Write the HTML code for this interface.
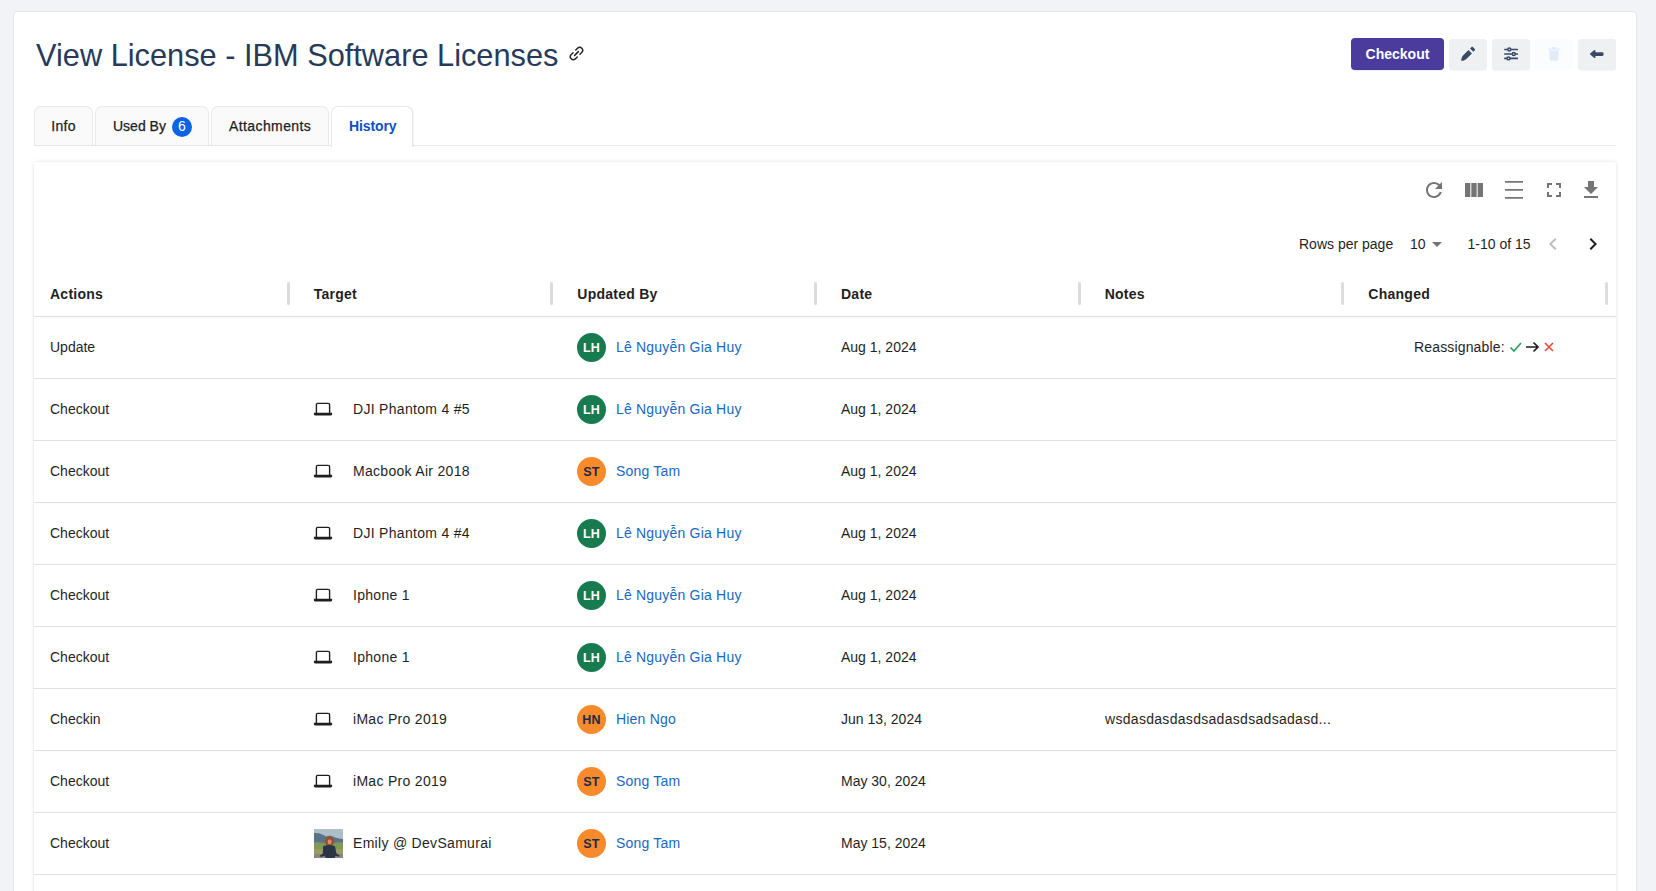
<!DOCTYPE html>
<html><head><meta charset="utf-8">
<style>
*{box-sizing:border-box;margin:0;padding:0}
html,body{width:1656px;height:891px;overflow:hidden}
body{background:#f2f3f6;font-family:"Liberation Sans",sans-serif;color:#1f1f1f;position:relative}
.abs{position:absolute}
.card{position:absolute;left:13px;top:11px;width:1624px;height:920px;background:#fff;border:1px solid #e3e5e9;border-radius:4px}
.title{position:absolute;left:36px;top:37.8px;font-size:30.75px;line-height:36px;color:#283a5a;white-space:nowrap}
.btn{position:absolute;left:1351px;top:38px;width:93px;height:32px;border-radius:4px;background:#4a3b9d;color:#fff;font-size:14px;font-weight:bold;text-align:center;line-height:32px;box-shadow:0 1px 1px rgba(80,140,220,.15)}
.ibtn{position:absolute;top:39px;width:38px;height:31px;border-radius:3px;background:#eef0f2;box-shadow:0 1px 1px rgba(0,0,0,.04)}
.ibtn svg{position:absolute}
.tabline{position:absolute;left:34px;top:145px;width:1582px;height:1px;background:#e6e6e6}
.tab{position:absolute;top:106px;height:39px;background:#fafafa;border:1px solid #e8e8e8;border-bottom:none;border-radius:7px 7px 0 0;font-size:14px;color:#1d1d1d}
.tab span{position:absolute;top:11px;line-height:16px;white-space:nowrap;-webkit-text-stroke:.25px currentColor}
.badge{position:absolute;left:76px;top:10px;width:20px;height:20px;border-radius:50%;background:#0b63e5;color:#fff;font-size:13px;text-align:center;line-height:19.5px}
.paper{position:absolute;left:34px;top:162px;width:1582px;height:760px;background:#fff;border-radius:2px;box-shadow:0 0 4px rgba(0,0,0,.11),0 1px 2px rgba(0,0,0,.05)}
.t{position:absolute;font-size:14px;line-height:16px;color:#1f1f1f;white-space:nowrap}
.sep{position:absolute;top:282px;width:3px;height:23px;border-radius:2px;background:#dcdcdc}
.hdrline{position:absolute;left:34px;top:316px;width:1582px;height:1px;background:#e0e0e0;box-shadow:0 1px 3px rgba(0,0,0,.06)}
.row{position:absolute;left:34px;width:1582px;height:62px;border-bottom:1px solid #e0e0e0}
.av{position:absolute;width:29px;height:29px;border-radius:50%;font-size:12.5px;font-weight:bold;text-align:center;line-height:30.5px;letter-spacing:.2px}
.thumb{position:absolute;width:29px;height:29px;background:linear-gradient(180deg,#8fb0cf 0%,#9fb9c9 30%,#7c8f62 45%,#5d7340 70%,#8a8a6a 100%)}
.ticon{position:absolute;fill:#757575}
</style></head><body>
<div class="card"></div>
<div class="title">View License - IBM Software Licenses</div>
<svg class="abs" style="left:568.6px;top:46.4px" width="15" height="15" viewBox="0 0 16 16"><g fill="none" stroke="#222" stroke-width="1.55" stroke-linecap="round"><path d="M7.2 4.2L9.1 2.4a3.1 3.1 0 0 1 4.5 4.5L11.7 8.8"/><path d="M4.3 7.2L2.4 9.1a3.1 3.1 0 0 0 4.5 4.5L8.8 11.7"/><path d="M6 10L10 6"/></g></svg>

<div class="btn">Checkout</div>
<div class="ibtn" style="left:1449px"><svg style="left:11px;top:7px" width="16" height="16" viewBox="0 0 16 16"><path d="M8.5 4L11.9 7.4 6.4 12.9C5 14.2 2.5 14.8 1.1 14.8 1.2 13.4 1.7 11 3 9.5Z" fill="#384965"/><path d="M10 2.4L11.3 1.2C11.8.7 12.6.7 13.1 1.2L14.6 2.7C15.1 3.2 15.1 4 14.6 4.5L13.4 5.8Z" fill="#384965"/></svg></div>
<div class="ibtn" style="left:1492px"><svg style="left:11px;top:7px" width="16" height="16" viewBox="0 0 16 16"><g fill="none" stroke="#384965" stroke-width="1.7" stroke-linecap="round"><path d="M1.9 3.5h12.4M1.9 8h12.4M1.9 12.4h12.4"/></g><g fill="#eef0f2" stroke="#384965" stroke-width="1.5"><circle cx="6.3" cy="3.5" r="1.45"/><circle cx="10.75" cy="8" r="1.45"/><circle cx="5.5" cy="12.4" r="1.45"/></g></svg></div>
<div class="ibtn" style="left:1535px;background:#fafcfe;box-shadow:none"><svg style="left:12px;top:6.6px" width="14" height="15" viewBox="0 0 14 15"><path d="M1 2.5h12v1.3H1z M5 1h4v1.5H5z" fill="#e2ebf7"/><path d="M2 4.5h10l-.9 9.2c-.1.7-.5 1-1.1 1H4c-.6 0-1-.3-1.1-1z" fill="#e2ebf7"/></svg></div>
<div class="ibtn" style="left:1578px"><svg style="left:11px;top:10px" width="15" height="10" viewBox="0 0 15 10"><path d="M5.3 1.1L1.2 4.4c-.4.3-.4.9 0 1.2l4.1 3.3c.5.4 1.1.1 1.1-.5V6.9h6.9c.7 0 1.2-.5 1.2-1.2V4.4c0-.7-.5-1.2-1.2-1.2H6.4V1.6c0-.6-.6-.9-1.1-.5z" fill="#384965"/></svg></div>

<div class="tabline"></div>
<div class="tab" style="left:34px;width:59px"><span style="left:16.3px;letter-spacing:.3px">Info</span></div>
<div class="tab" style="left:95px;width:114px"><span style="left:17px">Used By</span><div class="badge" style="font-size:14px">6</div></div>
<div class="tab" style="left:211px;width:118px"><span style="left:17px;letter-spacing:.4px">Attachments</span></div>
<div class="tab" style="left:331px;width:82px;background:#fff;height:41px;box-shadow:1px 0 1px rgba(0,0,0,.04)"><span style="left:17px;color:#0d50c6;font-weight:bold;letter-spacing:-.1px;-webkit-text-stroke:0">History</span></div>

<div class="paper"></div>
<svg class="ticon" style="left:1421.5px;top:177.6px" width="24" height="24" viewBox="0 0 24 24"><path d="M17.65 6.35C16.2 4.9 14.21 4 12 4c-4.42 0-7.99 3.58-7.99 8s3.57 8 7.99 8c3.73 0 6.84-2.55 7.730-6h-2.08c-.82 2.33-3.04 4-5.65 4-3.31 0-6-2.690-6-6s2.69-6 6-6c1.66 0 3.14.69 4.22 1.78L13 11h7V4l-2.35 2.35z"/></svg>
<svg class="ticon" style="left:1462px;top:177.7px" width="24" height="24" viewBox="0 0 24 24"><path d="M14.67 5v14H9.33V5h5.34zm1 14H21V5h-5.33v14zm-7.34 0V5H3v14h5.33z"/></svg>
<svg class="abs" style="left:1505px;top:180px" width="19" height="20" viewBox="0 0 19 20"><path d="M0 1.9h18M0 9.8h18M0 17.8h18" stroke="#757575" stroke-width="1.8"/></svg>
<svg class="ticon" style="left:1542px;top:177.7px" width="24" height="24" viewBox="0 0 24 24"><path d="M7 14H5v5h5v-2H7v-3zm-2-4h2V7h3V5H5v5zm12 7h-3v2h5v-5h-2v3zM14 5v2h3v3h2V5h-5z"/></svg>
<svg class="ticon" style="left:1579px;top:178px" width="24" height="24" viewBox="0 0 24 24"><path d="M19 9h-4V3H9v6H5l7 7 7-7zM5 18v2h14v-2H5z"/></svg>

<div class="t" style="left:1299px;top:235.6px">Rows per page</div>
<div class="t" style="left:1410px;top:235.6px">10</div>
<svg class="ticon" style="left:1425px;top:232px" width="24" height="24" viewBox="0 0 24 24"><path d="M7 10l5 5 5-5z"/></svg>
<div class="t" style="left:1467.5px;top:235.6px">1-10 of 15</div>
<svg class="abs" style="left:1541px;top:232.4px" width="24" height="24" viewBox="0 0 24 24"><path d="M15.41 7.41L14 6l-6 6 6 6 1.41-1.41L10.83 12z" fill="rgba(0,0,0,.26)"/></svg>
<svg class="abs" style="left:1581.4px;top:232.4px" width="24" height="24" viewBox="0 0 24 24"><path d="M10 6L8.59 7.41 13.17 12l-4.58 4.59L10 18l6-6z" fill="#1f1f1f"/></svg>

<div class="t" style="left:50.0px;top:285.77px;font-weight:bold;letter-spacing:.25px">Actions</div>
<div class="sep" style="left:286.67px"></div>
<div class="t" style="left:313.667px;top:285.77px;font-weight:bold;letter-spacing:.25px">Target</div>
<div class="sep" style="left:550.33px"></div>
<div class="t" style="left:577.334px;top:285.77px;font-weight:bold;letter-spacing:.25px">Updated By</div>
<div class="sep" style="left:814.00px"></div>
<div class="t" style="left:841.001px;top:285.77px;font-weight:bold;letter-spacing:.25px">Date</div>
<div class="sep" style="left:1077.67px"></div>
<div class="t" style="left:1104.668px;top:285.77px;font-weight:bold;letter-spacing:.25px">Notes</div>
<div class="sep" style="left:1341.33px"></div>
<div class="t" style="left:1368.3349999999998px;top:285.77px;font-weight:bold;letter-spacing:.25px">Changed</div>
<div class="sep" style="left:1605.00px"></div>
<div class="hdrline"></div>
<div class="row" style="top:317px"></div>
<div class="t" style="left:50px;top:339.37px;">Update</div>
<div class="av" style="left:577px;top:332.80px;background:#187a4f;color:#fff">LH</div>
<div class="t" style="left:616px;top:339.37px;color:#1768c4;letter-spacing:.2px">Lê Nguyễn Gia Huy</div>
<div class="t" style="left:841px;top:339.37px;">Aug 1, 2024</div>
<div class="t" style="left:1414px;top:339.37px;letter-spacing:.15px">Reassignable:</div>
<svg class="abs" style="left:1509px;top:341.30px" width="46" height="12" viewBox="0 0 46 12"><path d="M1.5 6.5l3.5 3.5 7-8" fill="none" stroke="#2a9d62" stroke-width="1.6"/><path d="M17 6h12M24.5 1.5l4.5 4.5-4.5 4.5" fill="none" stroke="#1f1f1f" stroke-width="1.7"/><path d="M36 2l8 8M44 2l-8 8" fill="none" stroke="#ef4630" stroke-width="1.6"/></svg>
<div class="row" style="top:379px"></div>
<div class="t" style="left:50px;top:401.37px;">Checkout</div>
<svg class="abs" style="left:313px;top:402.2px" width="20" height="14" viewBox="0 0 20 14"><path d="M3.4 11V2.8c0-.9.5-1.4 1.4-1.4h10.4c.9 0 1.4.5 1.4 1.4V11" fill="none" stroke="#1f1f1f" stroke-width="1.4"/><path d="M.9 10.8h18.2v1.4c0 .7-.5 1.2-1.2 1.2H2.1c-.7 0-1.2-.5-1.2-1.2z" fill="#1f1f1f"/></svg>
<div class="t" style="left:353px;top:401.37px;letter-spacing:.3px">DJI Phantom 4 #5</div>
<div class="av" style="left:577px;top:394.80px;background:#187a4f;color:#fff">LH</div>
<div class="t" style="left:616px;top:401.37px;color:#1768c4;letter-spacing:.2px">Lê Nguyễn Gia Huy</div>
<div class="t" style="left:841px;top:401.37px;">Aug 1, 2024</div>
<div class="row" style="top:441px"></div>
<div class="t" style="left:50px;top:463.37px;">Checkout</div>
<svg class="abs" style="left:313px;top:464.2px" width="20" height="14" viewBox="0 0 20 14"><path d="M3.4 11V2.8c0-.9.5-1.4 1.4-1.4h10.4c.9 0 1.4.5 1.4 1.4V11" fill="none" stroke="#1f1f1f" stroke-width="1.4"/><path d="M.9 10.8h18.2v1.4c0 .7-.5 1.2-1.2 1.2H2.1c-.7 0-1.2-.5-1.2-1.2z" fill="#1f1f1f"/></svg>
<div class="t" style="left:353px;top:463.37px;letter-spacing:.3px">Macbook Air 2018</div>
<div class="av" style="left:577px;top:456.80px;background:#f78b2c;color:#1f2a44">ST</div>
<div class="t" style="left:616px;top:463.37px;color:#1768c4;letter-spacing:.2px">Song Tam</div>
<div class="t" style="left:841px;top:463.37px;">Aug 1, 2024</div>
<div class="row" style="top:503px"></div>
<div class="t" style="left:50px;top:525.37px;">Checkout</div>
<svg class="abs" style="left:313px;top:526.2px" width="20" height="14" viewBox="0 0 20 14"><path d="M3.4 11V2.8c0-.9.5-1.4 1.4-1.4h10.4c.9 0 1.4.5 1.4 1.4V11" fill="none" stroke="#1f1f1f" stroke-width="1.4"/><path d="M.9 10.8h18.2v1.4c0 .7-.5 1.2-1.2 1.2H2.1c-.7 0-1.2-.5-1.2-1.2z" fill="#1f1f1f"/></svg>
<div class="t" style="left:353px;top:525.37px;letter-spacing:.3px">DJI Phantom 4 #4</div>
<div class="av" style="left:577px;top:518.80px;background:#187a4f;color:#fff">LH</div>
<div class="t" style="left:616px;top:525.37px;color:#1768c4;letter-spacing:.2px">Lê Nguyễn Gia Huy</div>
<div class="t" style="left:841px;top:525.37px;">Aug 1, 2024</div>
<div class="row" style="top:565px"></div>
<div class="t" style="left:50px;top:587.37px;">Checkout</div>
<svg class="abs" style="left:313px;top:588.2px" width="20" height="14" viewBox="0 0 20 14"><path d="M3.4 11V2.8c0-.9.5-1.4 1.4-1.4h10.4c.9 0 1.4.5 1.4 1.4V11" fill="none" stroke="#1f1f1f" stroke-width="1.4"/><path d="M.9 10.8h18.2v1.4c0 .7-.5 1.2-1.2 1.2H2.1c-.7 0-1.2-.5-1.2-1.2z" fill="#1f1f1f"/></svg>
<div class="t" style="left:353px;top:587.37px;letter-spacing:.3px">Iphone 1</div>
<div class="av" style="left:577px;top:580.80px;background:#187a4f;color:#fff">LH</div>
<div class="t" style="left:616px;top:587.37px;color:#1768c4;letter-spacing:.2px">Lê Nguyễn Gia Huy</div>
<div class="t" style="left:841px;top:587.37px;">Aug 1, 2024</div>
<div class="row" style="top:627px"></div>
<div class="t" style="left:50px;top:649.37px;">Checkout</div>
<svg class="abs" style="left:313px;top:650.2px" width="20" height="14" viewBox="0 0 20 14"><path d="M3.4 11V2.8c0-.9.5-1.4 1.4-1.4h10.4c.9 0 1.4.5 1.4 1.4V11" fill="none" stroke="#1f1f1f" stroke-width="1.4"/><path d="M.9 10.8h18.2v1.4c0 .7-.5 1.2-1.2 1.2H2.1c-.7 0-1.2-.5-1.2-1.2z" fill="#1f1f1f"/></svg>
<div class="t" style="left:353px;top:649.37px;letter-spacing:.3px">Iphone 1</div>
<div class="av" style="left:577px;top:642.80px;background:#187a4f;color:#fff">LH</div>
<div class="t" style="left:616px;top:649.37px;color:#1768c4;letter-spacing:.2px">Lê Nguyễn Gia Huy</div>
<div class="t" style="left:841px;top:649.37px;">Aug 1, 2024</div>
<div class="row" style="top:689px"></div>
<div class="t" style="left:50px;top:711.37px;">Checkin</div>
<svg class="abs" style="left:313px;top:712.2px" width="20" height="14" viewBox="0 0 20 14"><path d="M3.4 11V2.8c0-.9.5-1.4 1.4-1.4h10.4c.9 0 1.4.5 1.4 1.4V11" fill="none" stroke="#1f1f1f" stroke-width="1.4"/><path d="M.9 10.8h18.2v1.4c0 .7-.5 1.2-1.2 1.2H2.1c-.7 0-1.2-.5-1.2-1.2z" fill="#1f1f1f"/></svg>
<div class="t" style="left:353px;top:711.37px;letter-spacing:.3px">iMac Pro 2019</div>
<div class="av" style="left:577px;top:704.80px;background:#f78b2c;color:#1f2a44">HN</div>
<div class="t" style="left:616px;top:711.37px;color:#1768c4;letter-spacing:.2px">Hien Ngo</div>
<div class="t" style="left:841px;top:711.37px;">Jun 13, 2024</div>
<div class="t" style="left:1105px;top:711.37px;letter-spacing:.3px">wsdasdasdasdsadasdsadsadasd...</div>
<div class="row" style="top:751px"></div>
<div class="t" style="left:50px;top:773.37px;">Checkout</div>
<svg class="abs" style="left:313px;top:774.2px" width="20" height="14" viewBox="0 0 20 14"><path d="M3.4 11V2.8c0-.9.5-1.4 1.4-1.4h10.4c.9 0 1.4.5 1.4 1.4V11" fill="none" stroke="#1f1f1f" stroke-width="1.4"/><path d="M.9 10.8h18.2v1.4c0 .7-.5 1.2-1.2 1.2H2.1c-.7 0-1.2-.5-1.2-1.2z" fill="#1f1f1f"/></svg>
<div class="t" style="left:353px;top:773.37px;letter-spacing:.3px">iMac Pro 2019</div>
<div class="av" style="left:577px;top:766.80px;background:#f78b2c;color:#1f2a44">ST</div>
<div class="t" style="left:616px;top:773.37px;color:#1768c4;letter-spacing:.2px">Song Tam</div>
<div class="t" style="left:841px;top:773.37px;">May 30, 2024</div>
<div class="row" style="top:813px"></div>
<div class="t" style="left:50px;top:835.37px;">Checkout</div>
<svg class="abs" style="left:314px;top:828.50px" width="29" height="29" viewBox="0 0 29 29"><rect width="29" height="29" fill="#aebfc8"/><path d="M0 4C5 3.5 8 5 12 7.5c3-1.5 6-1 9 1 3 1 5 1 8 1.5V29H0z" fill="#5a7389"/><path d="M0 13.5c5-.5 9 .5 13 1s10-2 16-1V29H0z" fill="#7e9a56"/><path d="M0 20h29v5H0z" fill="#9a9d62"/><path d="M0 25h29v4H0z" fill="#8c8682"/><ellipse cx="15.5" cy="12.5" rx="4.4" ry="5" fill="#9c4e2a"/><ellipse cx="15.6" cy="12.8" rx="2" ry="2.6" fill="#cf8f74"/><path d="M9 17.5c2.5-2 9.5-2 12 0l1.5 7 3 1.8-.5 1.5-3.5-1-1 2.2H11.5l-.5-2.2-4.5 1.2-.6-1.6 3-1.8z" fill="#2c3547"/></svg>
<div class="t" style="left:353px;top:835.37px;letter-spacing:.3px">Emily @ DevSamurai</div>
<div class="av" style="left:577px;top:828.80px;background:#f78b2c;color:#1f2a44">ST</div>
<div class="t" style="left:616px;top:835.37px;color:#1768c4;letter-spacing:.2px">Song Tam</div>
<div class="t" style="left:841px;top:835.37px;">May 15, 2024</div>
<div class="row" style="top:875px"></div>
<div class="t" style="left:50px;top:897.37px;">Checkout</div>
<div class="av" style="left:577px;top:890.80px;background:#f78b2c;color:#1f2a44">ST</div>
<div class="t" style="left:616px;top:897.37px;color:#1768c4;letter-spacing:.2px">Song Tam</div>
</body></html>
